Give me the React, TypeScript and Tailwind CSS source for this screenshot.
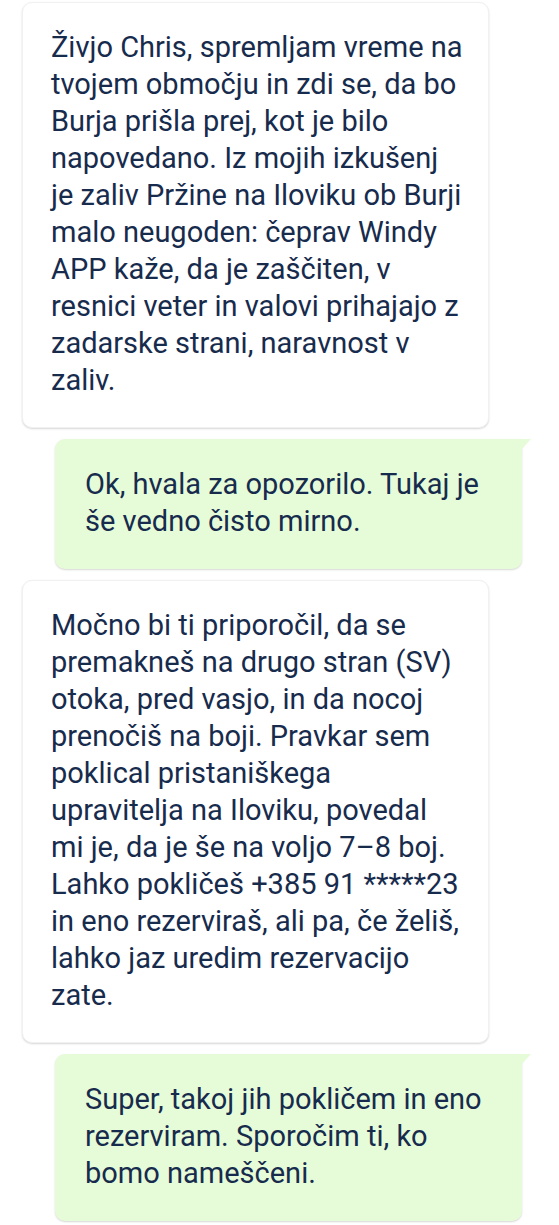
import React from "react";

type Message = {
  id: number;
  from: "them" | "me";
  text: string;
};

const messages: Message[] = [
  {
    id: 1,
    from: "them",
    text: "Živjo Chris, spremljam vreme na tvojem območju in zdi se, da bo Burja prišla prej, kot je bilo napovedano. Iz mojih izkušenj je zaliv Pržine na Iloviku ob Burji malo neugoden: čeprav Windy APP kaže, da je zaščiten, v resnici veter in valovi prihajajo z zadarske strani, naravnost v zaliv.",
  },
  {
    id: 2,
    from: "me",
    text: "Ok, hvala za opozorilo. Tukaj je še vedno čisto mirno.",
  },
  {
    id: 3,
    from: "them",
    text: "Močno bi ti priporočil, da se premakneš na drugo stran (SV) otoka, pred vasjo, in da nocoj prenočiš na boji. Pravkar sem poklical pristaniškega upravitelja na Iloviku, povedal mi je, da je še na voljo 7–8 boj. Lahko pokličeš +385 91 *****23 in eno rezerviraš, ali pa, če želiš, lahko jaz uredim rezervacijo zate.",
  },
  {
    id: 4,
    from: "me",
    text: "Super, takoj jih pokličem in eno rezerviram. Sporočim ti, ko bomo nameščeni.",
  },
];

function Bubble({ message }: { message: Message }) {
  if (message.from === "me") {
    return (
      <div className="relative self-end w-[467px] bg-[#e6fcd9] rounded-[10px] rounded-tr-none shadow-[0_1px_2px_rgba(0,0,0,0.16)] pl-[30px] pr-[26px] pt-[27px] pb-[29px]">
        <span className="absolute top-0 right-[-9px] w-0 h-0 border-t-[10px] border-t-[#e6fcd9] border-r-[9px] border-r-transparent" />
        <p className="text-[29px] leading-[37px] text-[#172b4d]">{message.text}</p>
      </div>
    );
  }

  return (
    <div className="self-start w-[467px] bg-white rounded-[10px] border border-[#f1f1f1] shadow-[0_1px_2px_rgba(0,0,0,0.16)] pl-[28px] pr-[24px] pt-[26px] pb-[28px]">
      <p className="text-[29px] leading-[37px] text-[#172b4d]">{message.text}</p>
    </div>
  );
}

export default function App() {
  return (
    <div
      className="min-h-screen bg-white pt-[2px] pl-[22px] pr-[37px] flex flex-col gap-[11px]"
      style={{ fontFamily: "Roboto, 'Noto Sans', sans-serif" }}
    >
      {messages.map((m) => (
        <Bubble key={m.id} message={m} />
      ))}
    </div>
  );
}
